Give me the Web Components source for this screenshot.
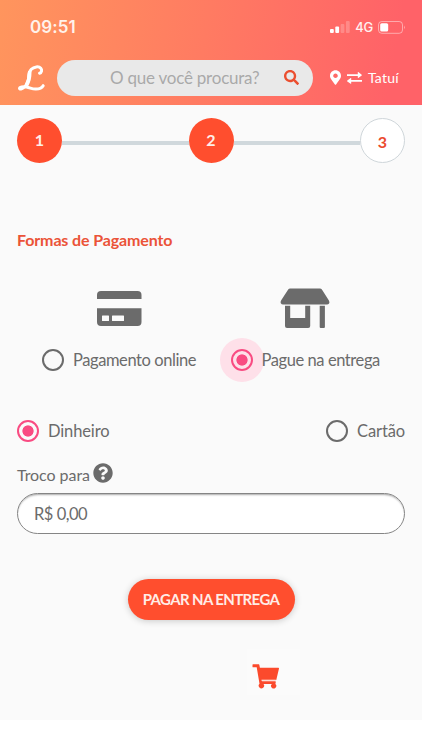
<!DOCTYPE html>
<html lang="pt-BR">
<head>
<meta charset="utf-8">
<title>Pagamento</title>
<style>
html,body{margin:0;background:#fff}
body{width:422px;height:750px;overflow:hidden;font-family:Lato,"Open Sans",sans-serif;color:#6b6b6b}
</style>
</head>
<body>
<checkout-page></checkout-page>
<script>
const define = (name, html) => customElements.define(name, class extends HTMLElement {
  constructor() {
    super();
    const t = document.createElement('template');
    t.innerHTML = html;
    this.attachShadow({mode: 'open'}).append(t.content.cloneNode(true));
  }
});

define('status-bar', `<style>
:host{display:flex;align-items:center;height:54px;padding:0 16px 0 30px;box-sizing:border-box;color:#fff;font-family:Inter,sans-serif}
time{font-size:17px;font-weight:600;letter-spacing:.05px;color:#fff2ea;flex:1;position:relative;top:-.5px}
.net{font-size:13px;font-weight:500;margin:0 5px 0 5px;letter-spacing:-.2px;color:#fff0f0}
svg{display:block}
</style>
<time>09:51</time>
<svg width="20" height="12" viewBox="0 0 20 12"><rect x="0" y="8" width="3.8" height="4" rx="1" fill="#fff"/><rect x="5.3" y="5.5" width="3.8" height="6.5" rx="1" fill="#fff"/><rect x="10.6" y="3" width="3.8" height="9" rx="1" fill="#fff" opacity=".22"/><rect x="15.9" y="0" width="3.8" height="12" rx="1" fill="#fff" opacity=".22"/></svg>
<span class="net">4G</span>
<svg width="28" height="13" viewBox="0 0 28 13"><rect x=".5" y=".5" width="24" height="11.8" rx="3.3" fill="none" stroke="#fff" opacity=".45"/><rect x="2.2" y="2.2" width="8" height="8.4" rx="1.6" fill="#fff"/><path d="M26 4.5q1.8 1.9 0 3.8z" fill="#fff" opacity=".5"/></svg>`);

define('brand-logo', `<style>:host{display:block;width:28px;height:28px}svg{display:block}</style>
<svg width="28" height="28" viewBox="0 0 28 28" fill="none" stroke="#fff" stroke-linecap="round" stroke-linejoin="round"><path d="M21.500 9.200C23.800 8.600 24.200 5.800 22.800 4.200C20.800 2 16 2.600 13.300 5.300C10.600 8.200 11 11.500 10.500 15C10 18.500 8.500 21.500 5.800 23.600C4 25 1.700 25.600 1.500 24.400C1.500 22.800 5 22.400 8.500 23C12.500 23.800 14.500 25.300 18 25.100C21.500 24.900 24 23.700 25.200 21.700" stroke-width="3"/><path d="M11.600 8.500Q11.700 15.500 8.600 21" stroke-width="3.800"/></svg>`);

define('search-box', `<style>
:host{display:flex;align-items:center;box-sizing:border-box;width:256px;height:36px;border-radius:18px;background:#e9e9e9;padding:0 14px 0 53px;color:#a9a9a9;font-size:17px;letter-spacing:-.23px;justify-content:space-between}
span{white-space:nowrap;position:relative;top:-.5px}
svg{display:block}</style><span><slot></slot></span>
<svg width="15" height="15" viewBox="0 0 512 512"><path fill="#eb4f30" d="M505 442.700 405.300 343c-4.500-4.500-10.600-7-17-7H372c27.600-35.300 44-79.700 44-128C416 93.100 322.900 0 208 0S0 93.100 0 208s93.100 208 208 208c48.300 0 92.700-16.400 128-44v16.300c0 6.400 2.500 12.500 7 17l99.700 99.700c9.400 9.400 24.600 9.400 33.900 0l28.300-28.300c9.400-9.400 9.400-24.600.1-34zM208 336c-70.700 0-128-57.200-128-128 0-70.700 57.200-128 128-128 70.700 0 128 57.200 128 128 0 70.700-57.200 128-128 128z"/></svg>`);

define('city-picker', `<style>
:host{display:flex;align-items:center;color:#fff;font-size:14px;letter-spacing:.2px;white-space:nowrap}
svg{display:block}.swap{margin:0 6px 0 6px}</style>
<svg width="11" height="15" viewBox="0 0 384 512"><path fill="#fff" d="M172.300 501.700C27 291 0 269.400 0 192 0 86 86 0 192 0s192 86 192 192c0 77.400-27 99-172.300 309.700-9.500 13.800-29.900 13.800-39.400 0zM192 272c44.200 0 80-35.800 80-80s-35.800-80-80-80-80 35.800-80 80 35.800 80 80 80z"/></svg>
<svg class="swap" width="15" height="12" viewBox="0 0 15 12" fill="#fff"><path d="M0 2.200h10.800V.3q0-.5.500-.2l3.400 2.600q.4.400 0 .8l-3.400 2.400q-.5.200-.5-.3V4H0z"/><path d="M15 8H4.200V6.200q0-.5-.5-.2L.3 8.600q-.4.400 0 .8l3.400 2.400q.5.200.5-.3V9.800H15z"/></svg>
<slot></slot>`);

define('app-header', `<style>
:host{display:block;height:105px;background:linear-gradient(100deg,#ff955d,#ff7b62 48%,#ff6268 92%)}
.bar{display:flex;align-items:center;height:47px;padding-left:18px}
search-box{margin-left:11px}city-picker{margin-left:17px}
</style><status-bar></status-bar><div class="bar"><brand-logo></brand-logo><search-box>O que você procura?</search-box><city-picker>Tatuí</city-picker></div>`);

define('step-dot', `<style>
:host{display:flex;align-items:center;justify-content:center;width:45px;height:45px;box-sizing:border-box;border-radius:50%;background:#ff4e2e;color:#ffeee9;font-size:16px;font-weight:700;flex:none;padding-bottom:2px}
:host([pending]){background:#fff;border:1px solid #cfd6da;color:#eb4b2e;padding:1px 0 0}
</style><slot></slot>`);

define('step-track', `<style>
:host{display:flex;align-items:center;height:45px}
i{flex:1;height:4.500px;background:#d0d8dc;margin-top:5px}
</style><step-dot>1</step-dot><i></i><step-dot>2</step-dot><i></i><step-dot pending>3</step-dot>`);

define('radio-option', `<style>
:host{display:flex;align-items:center;gap:9px;font-size:16.500px;letter-spacing:-.12px;height:22px;white-space:nowrap}
b{display:block;box-sizing:border-box;width:22px;height:22px;border:2.500px solid #6b6b6b;border-radius:50%;flex:none}
:host([checked]) b{border-color:#f94b82;background:radial-gradient(circle,#f94b82 5.200px,transparent 6px)}
:host([focused]) b{box-shadow:0 0 0 11px #fee0e9;background:radial-gradient(circle,#f94b82 5.200px,#fee0e9 6px)}
:host([wide]){letter-spacing:-.42px}
span{position:relative;z-index:1;line-height:22px}
</style><b></b><span><slot></slot></span>`);

define('card-icon', `<style>:host{display:block}svg{display:block}</style>
<svg width="45" height="35" viewBox="0 0 45 35" fill="#6b6b6b"><path d="M0 8V4q0-4 4-4h36.500q4 0 4 4v4z"/><path fill-rule="evenodd" d="M0 17.300h44.500V31q0 4-4 4H4q-4 0-4-4zM5.500 24.500q-.5 0-.5.500v4.500q0 .5.500.5h6q.5 0 .5-.5V25q0-.5-.5-.5zm10 0q-.5 0-.5.500v4.500q0 .5.500.5H26.500q.5 0 .5-.5V25q0-.5-.5-.5z"/></svg>`);

define('store-icon', `<style>:host{display:block}svg{display:block}</style>
<svg width="50" height="41" viewBox="0 0 50 41" fill="#6b6b6b"><path d="M10.200 .5h29.600q1.400 0 2.100 1.100l7 10.800q1 1.800.2 3-.7 1.100-2.200 1.100H3.100Q1.500 16.500 .800 15.300q-.7-1.200.4-3l7-10.700Q8.800.5 10.200.5z"/><path d="M5 17.800h5.200v12.300h15V17.800h5V38q0 2-2 2H7q-2 0-2-2zM39.700 17.800h5.200V39q0 1-1 1h-3.200q-1 0-1-1z"/></svg>`);

define('money-field', `<style>
:host{display:flex;align-items:center;box-sizing:border-box;height:41px;border:1px solid #858585;border-radius:21px;background:#fff;box-shadow:inset 0 2px 2px -1px #aaa;padding:0 16px;font-size:16.500px;letter-spacing:-.5px}
</style><slot></slot>`);

define('help-label', `<style>
:host{display:flex;align-items:center;height:24px;font-size:16px;letter-spacing:-.05px;gap:2.500px}
span{position:relative;top:0}svg{display:block;position:relative;top:-1px}</style><span><slot></slot></span>
<svg width="20" height="20" viewBox="0 0 512 512"><path fill="#6b6b6b" d="M504 256c0 137-111 248-248 248S8 393 8 256C8 119.100 119 8 256 8s248 111.100 248 248zM262.700 90c-54.500 0-89.300 23-116.500 63.800-3.500 5.300-2.400 12.400 2.700 16.300l34.700 26.300c5.200 3.900 12.600 3 16.700-2.100 17.900-22.700 30.100-35.800 57.300-35.800 20.400 0 45.700 13.100 45.700 33 0 15-12.400 22.700-32.500 34C247.100 238.500 216 254.900 216 296v4c0 6.600 5.400 12 12 12h56c6.600 0 12-5.400 12-12v-1.300c0-28.500 83.200-29.600 83.200-106.700 0-58-60.200-102-116.500-102zM256 338c-25.400 0-46 20.600-46 46s20.600 46 46 46 46-20.600 46-46-20.600-46-46-46z"/></svg>`);

define('pay-button', `<style>
:host{display:flex;align-items:center;justify-content:center;width:167px;height:41px;box-sizing:border-box;padding-bottom:1px;border-radius:21px;background:#ff4e2e;color:#ffece6;font-size:15px;font-weight:700;letter-spacing:-.62px;box-shadow:0 1px 7px rgba(0,0,0,.2);white-space:nowrap}
</style><slot></slot>`);

define('cart-button', `<style>
:host{display:flex;width:53px;height:46px;box-sizing:border-box;padding:15px 0 0 5px;background:#fbfbfb}svg{display:block}</style>
<svg width="28" height="25" viewBox="0 0 28 25" fill="#fb4a2c"><path d="M1 .3h5.800q.4 0 .5.500l.6 3H26.500q.6 0 .5.600L24.400 15.500q-.1.500-.6.500H9.700l.4 1.300h13.200q.6 0 .5.600l-.4 2a2.600 2.600 0 1 1-3.500 0H11.500a2.700 2.700 0 1 1-4-.2L4.700 3.300H1Q.5 3.300.5 2.800V.8Q.5.300 1 .3z"/><path d="M9.500 16.200h14.300" stroke="#ffd2c9" stroke-width="1.100"/></svg>`);

define('checkout-page', `<style>
:host{display:block;height:750px;background:#fff}
main{display:flex;flex-direction:column;box-sizing:border-box;height:615px;padding:13px 17px 0;background:#fafafa}
h1{margin:66.500px 0 0;font-size:16px;line-height:20px;font-weight:700;letter-spacing:-.13px;color:#eb5338}
.methods{display:grid;grid-template-columns:177px 1fr;margin-top:38.500px;padding-left:25px}
.m{display:grid;grid-template-rows:41px 22px;row-gap:20px}
.m>:first-child{align-self:center}
card-icon{margin-left:55px}store-icon{margin-left:61px}
.m:last-child radio-option{margin-left:11.500px}
.kinds{display:flex;justify-content:space-between;margin-top:49px}
help-label{margin-top:20px}money-field{margin-top:7px}
pay-button{margin:45px 0 0 110.500px}cart-button{margin:29px 0 0 230px}
</style>
<app-header></app-header>
<main>
<step-track></step-track>
<h1>Formas de Pagamento</h1>
<div class="methods"><div class="m"><card-icon></card-icon><radio-option wide>Pagamento online</radio-option></div><div class="m"><store-icon></store-icon><radio-option wide checked focused>Pague na entrega</radio-option></div></div>
<div class="kinds"><radio-option checked>Dinheiro</radio-option><radio-option>Cartão</radio-option></div>
<help-label>Troco para</help-label>
<money-field>R$ 0,00</money-field>
<pay-button>PAGAR NA ENTREGA</pay-button>
<cart-button></cart-button>
</main>`);
</script>
</body>
</html>
